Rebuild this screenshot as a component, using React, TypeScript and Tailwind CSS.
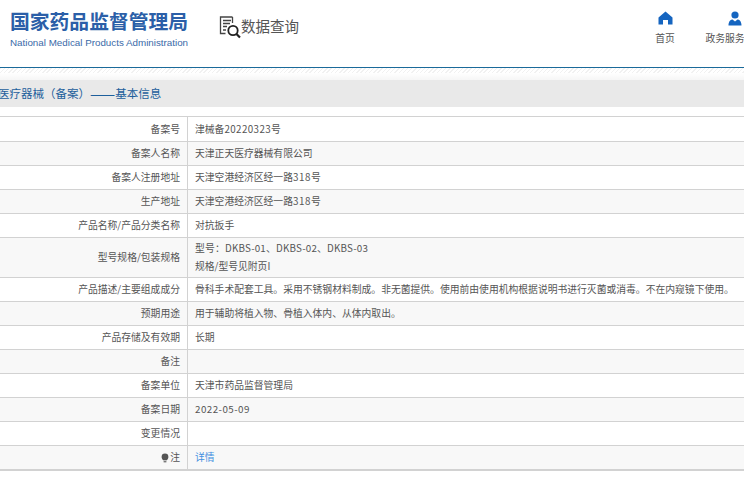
const F = '[font-family:"Noto_Sans_CJK_SC","Noto_Sans",sans-serif]';

const rows: { label: React.ReactNode; value?: React.ReactNode; h: string }[] = [
  { label: "备案号", value: <span>津械备<span className="tracking-[0.4px]">20220323</span>号</span>, h: "h-[25px]" },
  { label: "备案人名称", value: "天津正天医疗器械有限公司", h: "h-[24px]" },
  { label: "备案人注册地址", value: <span>天津空港经济区经一路<span className="tracking-[0.6px]">318</span>号</span>, h: "h-[24px]" },
  { label: "生产地址", value: <span>天津空港经济区经一路<span className="tracking-[0.6px]">318</span>号</span>, h: "h-[24px]" },
  { label: "产品名称/产品分类名称", value: "对抗扳手", h: "h-[24px]" },
  {
    label: "型号规格/包装规格",
    value: (
      <div className="flex flex-col gap-[3px]">
        <span className="tracking-[0.2px]">型号：DKBS-01、DKBS-02、DKBS-03</span>
        <span>规格/型号见附页I</span>
      </div>
    ),
    h: "h-[40px]",
  },
  {
    label: "产品描述/主要组成成分",
    value: "骨科手术配套工具。采用不锈钢材料制成。非无菌提供。使用前由使用机构根据说明书进行灭菌或消毒。不在内窥镜下使用。",
    h: "h-[24px]",
  },
  { label: "预期用途", value: "用于辅助将植入物、骨植入体内、从体内取出。", h: "h-[24px]" },
  { label: "产品存储及有效期", value: "长期", h: "h-[24px]" },
  { label: "备注", value: "", h: "h-[24px]" },
  { label: "备案单位", value: "天津市药品监督管理局", h: "h-[24px]" },
  { label: "备案日期", value: <span className="tracking-[0.45px]">2022-05-09</span>, h: "h-[24px]" },
  { label: "变更情况", value: "", h: "h-[24px]" },
  {
    label: (
      <span className="inline-flex items-center gap-[1px]">
        <svg width="8" height="10" viewBox="0 0 8 10">
          <path d="M4 0.5a3.4 3.4 0 0 1 3.4 3.4c0 1.5-1 2.4-1.6 3.4H2.2C1.6 6.300.6 5.400.6 3.900A3.400 3.400 0 0 1 4 .5z" fill="#555" />
          <rect x="2.600" y="7.800" width="2.800" height="1.600" fill="#777" />
        </svg>
        注
      </span>
    ),
    value: <span className="text-[#3f8fe0]">详情</span>,
    h: "h-[23px]",
  },
];

export default function App() {
  return (
    <div className={`w-[744px] h-[479px] overflow-hidden bg-white ${F} text-[9.8px] text-[#555]`}>
      <header className="h-[67px] flex">
        <div className="w-[200px] pl-[10px] pt-[8px] shrink-0">
          <div className="text-[19.800px] leading-[26px] font-bold text-[#2b5fa8] whitespace-nowrap">国家药品监督管理局</div>
          <div className="mt-[3px] text-[9.800px] leading-[12px] text-[#3a6aa8] whitespace-nowrap [font-family:'Liberation_Sans',sans-serif]">
            National Medical Products Administration
          </div>
        </div>
        <div className="flex items-start pt-[15px] pl-[19px] w-[442px] shrink-0">
          <svg width="23" height="24" viewBox="0 0 23 24" fill="none" className="shrink-0">
            <path d="M13.500 2H1.500V18.500H6.500" stroke="#444" strokeWidth="1.300" />
            <path d="M4 5.500H12M4 8.500H11M4 11.500H8M4 15H7" stroke="#444" strokeWidth="1.300" />
            <path d="M13.500 2V8" stroke="#444" strokeWidth="1.300" />
            <circle cx="14" cy="15.500" r="4.700" stroke="#222" strokeWidth="1.800" />
            <path d="M17.500 19L21 22.500" stroke="#222" strokeWidth="2.200" />
          </svg>
          <span className="text-[14.500px] leading-[22px] text-[#555] whitespace-nowrap -ml-[1px]">数据查询</span>
        </div>
        <div className="flex pt-[11px] whitespace-nowrap">
          <div className="flex flex-col items-center w-[20px] ml-[13px]">
            <svg width="15" height="14" viewBox="0 0 15 14">
              <path d="M7.500 0.500L14.500 6.500V13.500H10V9H5V13.500H.5V6.500z" fill="#1565c0" />
            </svg>
            <span className="mt-[6px] leading-[14px] text-[#555]">首页</span>
          </div>
          <div className="flex flex-col items-center w-[40px] ml-[30px]">
            <svg width="14" height="15" viewBox="0 0 14 15" className="self-start ml-[23px]">
              <circle cx="7" cy="4" r="3.600" fill="#1565c0" />
              <path d="M0.500 14.500C.5 10.500 2.500 8.500 4.500 8.500L7 10.500L9.500 8.500C11.500 8.500 13.500 10.500 13.500 14.500z" fill="#1565c0" />
            </svg>
            <span className="mt-[5px] leading-[14px] text-[#555]">政务服务</span>
          </div>
        </div>
      </header>

      <div className="h-[1px] bg-[#1a6a9a]" />
      <div className="h-[5px] bg-[repeating-linear-gradient(135deg,#f1f1f1_0,#f1f1f1_1px,#fff_1px,#fff_3px)]" />
      <div className="h-[7px] bg-gradient-to-b from-white to-[#f6f6f6]" />

      <div className="h-[27px] bg-[#e9e9e9] flex items-center -ml-[2px] text-[11.500px] text-[#1d5f9c] whitespace-nowrap">
        <span>医疗器械（备案）<span className="text-[15px] leading-none [vertical-align:-1.500px]">——</span>基本信息</span>
      </div>

      <div className="mt-[9px] border-t border-[#d2d2d2] border-b-2">
        {rows.map((r, i) => (
          <div
            key={i}
            className={`flex ${r.h} ${i % 2 === 1 ? "bg-[#f8f8f8]" : "bg-white"} ${
              i < rows.length - 1 ? "border-b border-[#d2d2d2]" : ""
            }`}
          >
            <div className="w-[188px] shrink-0 flex items-center justify-end pr-[7px] border-r border-[#d2d2d2] whitespace-nowrap">
              {r.label}
            </div>
            <div className="flex-1 flex items-center pl-[7px] whitespace-nowrap">{r.value}</div>
          </div>
        ))}
      </div>
    </div>
  );
}
